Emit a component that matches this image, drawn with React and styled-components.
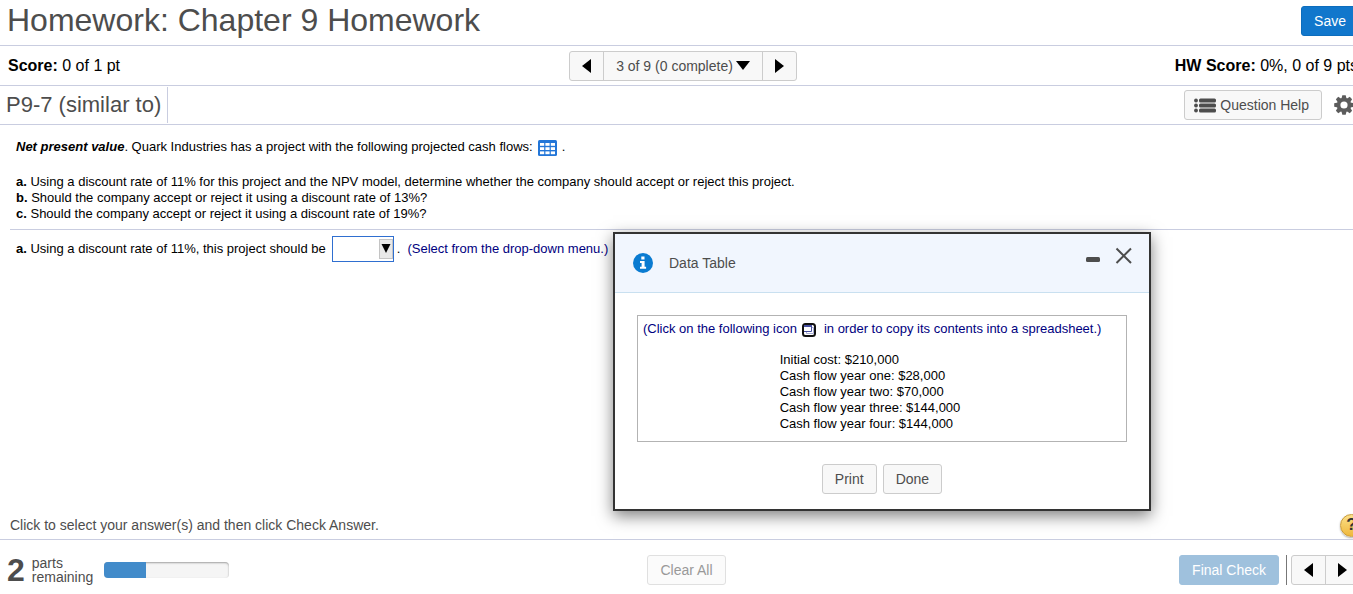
import { useState } from "react";
import styled, { createGlobalStyle } from "styled-components";

const cashFlows = [
  "Initial cost: $210,000",
  "Cash flow year one: $28,000",
  "Cash flow year two: $70,000",
  "Cash flow year three: $144,000",
  "Cash flow year four: $144,000",
];

export default function App() {
  const [answer, setAnswer] = useState("");
  const [showTable, setShowTable] = useState(true);
  const parts = 3;
  const done = 1;

  return (
    <>
      <GlobalStyle />
      <Page>
        <TopBar>
          <h1>Homework: Chapter 9 Homework</h1>
          <SaveButton type="button">Save</SaveButton>
        </TopBar>

        <ScoreBar>
          <p>
            <b>Score:</b> 0 of 1 pt
          </p>
          <ButtonGroup>
            <GroupButton type="button" aria-label="Previous question">
              <Arrow direction="left" />
            </GroupButton>
            <GroupButton type="button" $wide>
              3 of 9 (0 complete)
              <Arrow direction="down" />
            </GroupButton>
            <GroupButton type="button" aria-label="Next question">
              <Arrow direction="right" />
            </GroupButton>
          </ButtonGroup>
          <p>
            <b>HW Score:</b> 0%, 0 of 9 pts
          </p>
        </ScoreBar>

        <QuestionBar>
          <h2>P9-7 (similar to)</h2>
          <Tools>
            <Button type="button">
              <ListIcon />
              Question Help
            </Button>
            <IconButton type="button" aria-label="Settings">
              <GearIcon />
            </IconButton>
          </Tools>
        </QuestionBar>

        <Content>
          <Problem>
            <Intro>
              <b>
                <i>Net present value</i>
              </b>
              . Quark Industries has a project with the following projected cash
              flows:
              <TableButton
                type="button"
                aria-label="Data table"
                onClick={() => setShowTable(true)}
              >
                <TableIcon />
              </TableButton>
              .
            </Intro>
            <p>
              <b>a.</b> Using a discount rate of 11% for this project and the NPV
              model, determine whether the company should accept or reject this
              project.
            </p>
            <p>
              <b>b.</b> Should the company accept or reject it using a discount
              rate of 13%?
            </p>
            <p>
              <b>c.</b> Should the company accept or reject it using a discount
              rate of 19%?
            </p>
          </Problem>
          <AnswerRow>
            <label htmlFor="answer">
              <b>a.</b> Using a discount rate of 11%, this project should be
            </label>
            <SelectBox>
              <select
                id="answer"
                value={answer}
                onChange={(e) => setAnswer(e.target.value)}
              >
                <option value=""></option>
                <option value="accepted">accepted</option>
                <option value="rejected">rejected</option>
              </select>
              <SelectArrow>
                <svg width="10" height="9" viewBox="0 0 10 9">
                  <path d="M0.5 0h9L5 9z" fill="#000" />
                </svg>
              </SelectArrow>
            </SelectBox>
            <Hint>
              <span>.</span>
              (Select from the drop-down menu.)
            </Hint>
          </AnswerRow>
        </Content>

        <HelpRow>
          <p>Click to select your answer(s) and then click Check Answer.</p>
          <HelpButton type="button" aria-label="Help">
            ?
          </HelpButton>
        </HelpRow>

        <Footer>
          <Remaining>
            <strong>{parts - done}</strong>
            <span>
              parts
              <br />
              remaining
            </span>
            <Progress>
              <div style={{ width: `${(done / parts) * 100}%` }} />
            </Progress>
          </Remaining>
          <ClearButton type="button" disabled>
            Clear All
          </ClearButton>
          <Actions>
            <FinalButton type="button">Final Check</FinalButton>
            <Divider />
            <ButtonGroup>
              <GroupButton type="button" aria-label="Previous">
                <Arrow direction="left" />
              </GroupButton>
              <GroupButton type="button" aria-label="Next">
                <Arrow direction="right" />
              </GroupButton>
            </ButtonGroup>
          </Actions>
        </Footer>
      </Page>

      {showTable && (
        <Dialog role="dialog" aria-labelledby="dialog-title">
          <DialogHeader>
            <InfoIcon />
            <h3 id="dialog-title">Data Table</h3>
            <WindowButtons>
              <IconButton type="button" aria-label="Minimize">
                <svg width="14" height="20" viewBox="0 0 14 20">
                  <rect x="0" y="12" width="14" height="5" rx="1.5" fill="#4d4d4d" />
                </svg>
              </IconButton>
              <IconButton
                type="button"
                aria-label="Close"
                onClick={() => setShowTable(false)}
              >
                <svg width="18" height="20" viewBox="0 0 18 20">
                  <path
                    d="M1.5 3.5L16 18M16 3.5L1.5 18"
                    stroke="#4d4d4d"
                    strokeWidth="2"
                  />
                </svg>
              </IconButton>
            </WindowButtons>
          </DialogHeader>
          <DialogBody>
            <DataBox>
              <CopyLine>
                (Click on the following icon
                <IconButton type="button" aria-label="Copy to spreadsheet">
                  <CopyIcon />
                </IconButton>
                in order to copy its contents into a spreadsheet.)
              </CopyLine>
              <FlowList>
                {cashFlows.map((flow) => (
                  <li key={flow}>{flow}</li>
                ))}
              </FlowList>
            </DataBox>
            <DialogButtons>
              <Button type="button">Print</Button>
              <Button type="button" onClick={() => setShowTable(false)}>
                Done
              </Button>
            </DialogButtons>
          </DialogBody>
        </Dialog>
      )}
    </>
  );
}

function Arrow({ direction }) {
  if (direction === "down") {
    return (
      <svg width="14" height="9" viewBox="0 0 14 9">
        <path d="M0 0h14L7 9z" fill="#000" />
      </svg>
    );
  }
  return (
    <svg width="9" height="14" viewBox="0 0 9 14">
      <path d={direction === "left" ? "M9 0v14L0 7z" : "M0 0v14L9 7z"} fill="#000" />
    </svg>
  );
}

function ListIcon() {
  return (
    <svg width="22" height="15" viewBox="0 0 22 15" fill="#4d4d4d">
      {[0, 5, 10].map((y) => (
        <g key={y}>
          <circle cx="2" cy={y + 2.5} r="1.9" />
          <rect x="5" y={y + 0.5} width="17" height="4" rx="1.5" />
        </g>
      ))}
    </svg>
  );
}

function GearIcon() {
  return (
    <svg width="20" height="20" viewBox="0 0 20 20">
      <g fill="#5c5c5c">
        {[0, 45, 90, 135, 180, 225, 270, 315].map((a) => (
          <path key={a} d="M7.4 4L8.3 0.2h3.4L12.6 4z" transform={`rotate(${a} 10 10)`} />
        ))}
      </g>
      <circle cx="10" cy="10" r="5.4" fill="none" stroke="#5c5c5c" strokeWidth="3.6" />
    </svg>
  );
}

function TableIcon() {
  return (
    <svg width="19" height="16" viewBox="0 0 19 16">
      <rect width="19" height="16" rx="1.5" fill="#2376d8" />
      {[3, 7.2, 11.4].map((y) =>
        [2, 7.4, 12.8].map((x) => (
          <rect key={`${x}-${y}`} x={x} y={y} width="4.2" height="2.8" fill="#fff" />
        ))
      )}
    </svg>
  );
}

function InfoIcon() {
  return (
    <svg width="20" height="20" viewBox="0 0 20 20">
      <circle cx="10" cy="10" r="10" fill="#0a7bd1" />
      <path
        d="M8.3 3.6h3.2v2.9H8.3zM7 8h4.6v5.8h1.5v2H7v-2h1.6v-3.8H7z"
        fill="#fff"
      />
    </svg>
  );
}

function CopyIcon() {
  return (
    <svg width="14" height="14" viewBox="0 0 14 14">
      <rect x="1" y="1" width="12" height="12" rx="2.5" fill="#fff" stroke="#111" strokeWidth="2" />
      <path d="M10 4.5h1.5v6h-7V9" fill="none" stroke="#a9aed6" />
      <path d="M2 8.5h7.5V3" fill="none" stroke="#4750a0" />
      <rect x="2" y="2" width="8" height="2" fill="#4750a0" />
    </svg>
  );
}

const GlobalStyle = createGlobalStyle`
  * {
    box-sizing: border-box;
    margin: 0;
    padding: 0;
  }

  body {
    background-color: #fff;
    color: #000;
    font-family: "Liberation Sans", Arial, sans-serif;
    font-size: 13px;
    line-height: 16px;
    overflow: hidden;
  }

  button, select {
    font-family: inherit;
  }

  svg {
    display: block;
    flex-shrink: 0;
  }
`;

/* the page runs a little past the right edge of the window */
const Page = styled.div`
  width: calc(100% + 13px);
  min-height: 100vh;
  display: flex;
  flex-direction: column;
`;

const TopBar = styled.header`
  height: 46px;
  display: flex;
  justify-content: space-between;
  align-items: center;
  padding: 0 7px 4px;
  border-bottom: 1px solid #c9cde0;

  h1 {
    padding-bottom: 2px;
    font-size: 32px;
    line-height: 38px;
    font-weight: normal;
    color: #4d4d4d;
  }
`;

const Button = styled.button`
  height: 30px;
  display: flex;
  align-items: center;
  gap: 4px;
  padding: 0 12px;
  font-size: 14px;
  line-height: 20px;
  white-space: nowrap;
  color: #4d4d4d;
  background-color: #f8f8f8;
  border: 1px solid #ccc;
  border-radius: 3px;
  cursor: pointer;

  &:disabled {
    color: #999;
    background-color: #fbfbfb;
    border-color: #e0e0e0;
    cursor: default;
  }
`;

const SaveButton = styled(Button)`
  color: #fff;
  background-color: #1177cc;
  border-color: #0d6dbd;
`;

const ClearButton = styled(Button)`
  margin-left: 6px;
`;

const FinalButton = styled(Button)`
  color: #fff;
  background-color: #9fc1dd;
  border-color: #9fc1dd;
`;

const IconButton = styled.button`
  display: flex;
  background: none;
  border: none;
  cursor: pointer;
`;

const ScoreBar = styled.div`
  height: 40px;
  display: grid;
  grid-template-columns: 1fr auto 1fr;
  align-items: center;
  padding: 0 8px;
  font-size: 16px;
  border-bottom: 1px solid #c9cde0;

  p:last-child {
    text-align: right;
  }
`;

const ButtonGroup = styled.div`
  height: 30px;
  display: flex;
  background-color: #f8f8f8;
  border: 1px solid #ccc;
  border-radius: 3px;
`;

const GroupButton = styled.button`
  min-width: 33px;
  display: flex;
  justify-content: center;
  align-items: center;
  gap: 3px;
  padding: 0 ${({ $wide }) => ($wide ? "12px" : "0")};
  font-size: 14px;
  color: #4d4d4d;
  background: none;
  border: none;
  cursor: pointer;

  & + & {
    min-width: 34px;
    border-left: 1px solid #ccc;
  }
`;

const QuestionBar = styled.div`
  height: 39px;
  display: flex;
  justify-content: space-between;
  align-items: center;
  padding: 0 12px 0 0;
  border-bottom: 1px solid #c9cde0;

  h2 {
    padding: 0 6px;
    font-size: 22px;
    line-height: 36px;
    font-weight: normal;
    color: #4d4d4d;
    border-right: 1px solid #c9cde0;
  }
`;

const Tools = styled.div`
  display: flex;
  align-items: center;
  gap: 12px;

  ${Button} {
    padding: 0 12px 0 9px;
  }
`;

const Content = styled.main`
  flex: 1;
  padding-left: 10px;
`;

const Problem = styled.section`
  padding: 14px 6px 7px;
  border-bottom: 1px solid #c9cde0;
`;

const Intro = styled.p`
  margin-bottom: 18px;
`;

const TableButton = styled(IconButton)`
  display: inline-flex;
  height: 16px;
  margin: 0 5px;
  vertical-align: -5px;
`;

const AnswerRow = styled.div`
  display: flex;
  align-items: center;
  padding: 6px;
  gap: 6px;

  label {
    padding-bottom: 1px;
  }
`;

const SelectBox = styled.span`
  width: 62px;
  height: 26px;
  position: relative;

  select {
    width: 100%;
    height: 100%;
    padding: 0 18px 0 4px;
    appearance: none;
    background-color: #fff;
    border: 1px solid #2f6fd0;
  }
`;

const SelectArrow = styled.span`
  width: 14px;
  height: 20px;
  display: flex;
  justify-content: center;
  padding-top: 4px;
  position: absolute;
  top: 3px;
  right: 1px;
  background-color: #e8e8e8;
  border: 1px solid #c4c4c4;
  pointer-events: none;
`;

const Hint = styled.span`
  margin-left: -3px;
  padding-bottom: 1px;
  color: #000080;

  span {
    margin-right: 7px;
    color: #000;
  }
`;

const HelpRow = styled.div`
  height: 28px;
  display: flex;
  justify-content: space-between;
  align-items: center;
  padding: 0 3px 0 10px;
  font-size: 14px;
  color: #4d4d4d;
`;

const HelpButton = styled.button`
  width: 23px;
  height: 23px;
  font-size: 17px;
  font-weight: bold;
  line-height: 20px;
  color: #333;
  background: linear-gradient(#fbe08a, #efb83c);
  border: 1px solid #c99a3a;
  border-radius: 50%;
  box-shadow: 0 1px 2px rgba(0, 0, 0, 0.3);
  cursor: pointer;
`;

const Footer = styled.footer`
  height: 55px;
  display: grid;
  grid-template-columns: 1fr auto 1fr;
  align-items: center;
  padding: 6px 6px 0 7px;
  border-top: 1px solid #c9cde0;
`;

const Remaining = styled.div`
  display: flex;
  align-items: center;
  gap: 7px;
  font-size: 14px;
  line-height: 14px;
  color: #4d4d4d;

  strong {
    font-size: 32px;
    line-height: 32px;
  }
`;

const Progress = styled.div`
  width: 125px;
  height: 16px;
  margin-left: 4px;
  background-color: #f5f5f5;
  border-radius: 4px;
  box-shadow: inset 0 1px 2px rgba(0, 0, 0, 0.35);
  overflow: hidden;

  div {
    height: 100%;
    background-color: #428bca;
  }
`;

const Actions = styled.div`
  display: flex;
  justify-content: flex-end;
  align-items: center;
`;

const Divider = styled.span`
  width: 1px;
  height: 30px;
  margin: 0 4px 0 7px;
  background-color: #777;
`;

/* floating window over the exercise */
const Dialog = styled.div`
  width: 538px;
  position: absolute;
  top: 232px;
  left: 613px;
  background-color: #fff;
  border: 2px solid #333;
  box-shadow: 0 5px 15px rgba(0, 0, 0, 0.5);
`;

const DialogHeader = styled.div`
  height: 59px;
  display: flex;
  align-items: center;
  padding: 0 16px 0 18px;
  background-color: #f1f6fe;
  border-bottom: 1px solid #c9e0f0;

  h3 {
    flex: 1;
    margin-left: 16px;
    font-size: 14px;
    font-weight: normal;
    color: #4d4d4d;
  }
`;

const WindowButtons = styled.div`
  display: flex;
  align-self: flex-start;
  gap: 15px;
  padding-top: 11px;
`;

const DialogBody = styled.div`
  padding: 22px 22px 15px;
`;

const DataBox = styled.div`
  padding: 5px 5px 9px;
  border: 1px solid #b3b3b3;
`;

const CopyLine = styled.p`
  display: flex;
  color: #000080;

  button {
    margin: 2px 8px 0 5px;
  }
`;

const FlowList = styled.ul`
  width: fit-content;
  margin: 15px auto 0;
  padding-right: 24px;
  list-style: none;
`;

const DialogButtons = styled.div`
  display: flex;
  justify-content: center;
  gap: 6px;
  padding-top: 22px;
`;
